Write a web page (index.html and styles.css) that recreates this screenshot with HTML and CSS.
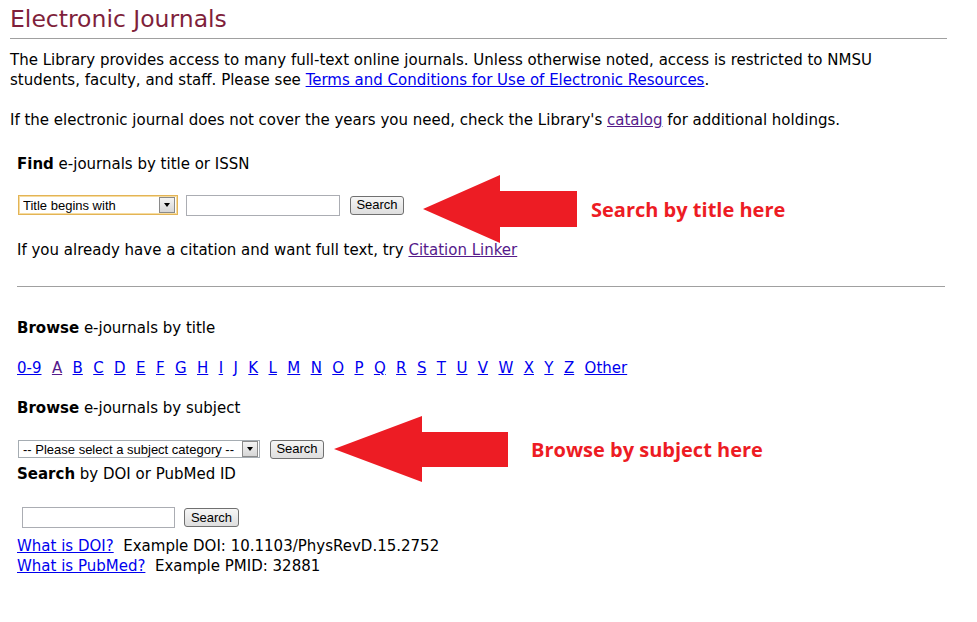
FILE: index.html
```html
<!DOCTYPE html>
<html lang="en">
<head>
    <meta charset="UTF-8">
    <title>Electronic Journals</title>
    <link rel="stylesheet" href="styles.css">
</head>
<body>
<div class="page">
    <h1 class="title">Electronic Journals</h1>

    <p class="intro">The Library provides access to many full-text online journals. Unless otherwise noted, access is restricted to NMSU students, faculty, and staff. Please see <a href="#">Terms and Conditions for Use of Electronic Resources</a>.</p>
    <p class="para">If the electronic journal does not cover the years you need, check the Library's <a href="#" class="visited">catalog</a> for additional holdings.</p>

    <div class="box">
        <div class="label find"><b>Find</b> e-journals by title or ISSN</div>
        <form class="row row-title">
            <span class="combo combo-focus">
                <select class="title-select"><option>Title begins with</option></select>
                <span class="combo-btn"><span class="tri"></span></span>
            </span>
            <input type="text" class="field field-title">
            <button type="button" class="btn">Search</button>
        </form>
        <p class="citation">If you already have a citation and want full text, try <a href="#" class="visited">Citation Linker</a></p>
    </div>

    <hr class="rule">

    <div class="box">
        <div class="label browse-title"><b>Browse</b> e-journals by title</div>
        <div class="letters">
            <a href="#">0-9</a><a href="#" class="visited">A</a><a href="#">B</a><a href="#">C</a><a href="#">D</a><a href="#">E</a><a href="#">F</a><a href="#">G</a><a href="#">H</a><a href="#">I</a><a href="#">J</a><a href="#">K</a><a href="#">L</a><a href="#">M</a><a href="#">N</a><a href="#">O</a><a href="#">P</a><a href="#">Q</a><a href="#">R</a><a href="#">S</a><a href="#">T</a><a href="#">U</a><a href="#">V</a><a href="#">W</a><a href="#">X</a><a href="#">Y</a><a href="#">Z</a><a href="#">Other</a>
        </div>
        <div class="label browse-subject"><b>Browse</b> e-journals by subject</div>
        <form class="row row-subject">
            <span class="combo combo-subject">
                <select class="subject-select"><option>-- Please select a subject category --</option></select>
                <span class="combo-btn"><span class="tri"></span></span>
            </span>
            <button type="button" class="btn">Search</button>
        </form>
        <div class="label doi-label"><b>Search</b> by DOI or PubMed ID</div>
        <form class="row row-doi">
            <input type="text" class="field field-doi">
            <button type="button" class="btn">Search</button>
        </form>
        <div class="examples">
            <div><a href="#">What is DOI?</a>&nbsp; Example DOI: 10.1103/PhysRevD.15.2752</div>
            <div><a href="#">What is PubMed?</a>&nbsp; Example PMID: 32881</div>
        </div>
    </div>

    <div class="note note-title">
        <svg class="arrow" width="156" height="70" viewBox="0 0 156 70">
            <polygon points="0,34 77,0 77,16 154,16 154,52 77,52 77,68" fill="#ed1c24"/>
        </svg>
        <span class="note-text">Search by title here</span>
    </div>
    <div class="note note-subject">
        <svg class="arrow" width="176" height="68" viewBox="0 0 176 68">
            <polygon points="0,33 88,0 88,16 174,16 174,51 88,51 88,66" fill="#ed1c24"/>
        </svg>
        <span class="note-text">Browse by subject here</span>
    </div>
</div>
</body>
</html>
```

FILE: styles.css
```css
body {
    margin: 0;
    background-color: #fff;
    color: #000;
    font-family: "DejaVu Sans", Verdana, sans-serif;
    font-size: 15px;
    line-height: 20px;
}
a { color: #0000ee; }
a.visited { color: #551a8b; }
.page {
    position: relative;
    padding: 0 30px 0 10px;
    width: 937px;
}
.title {
    margin: 0;
    padding: 6px 0 6px 0;
    font-size: 23.5px;
    line-height: 26px;
    font-weight: normal;
    color: #7f1f3b;
    border-bottom: 1px solid #a0a0a0;
}
.intro { margin: 11px 0 0 0; max-width: 900px; }
.para { margin: 20px 0 0 0; }
.box { padding-left: 7px; }
.label { line-height: 20px; }
.label b { font-weight: bold; }
.find { margin-top: 24px; }
.row {
    display: flex;
    align-items: center;
    margin: 0;
}
.row-title { margin-top: 21px; height: 20px; }
.citation { margin: 25px 0 0 0; }
.rule {
    margin: 26px 2px 0 7px;
    border: none;
    border-top: 1px solid #a0a0a0;
    height: 0;
}
.browse-title { margin-top: 31px; }
.letters {
    display: flex;
    gap: 10.4px;
    margin-top: 20px;
}
.browse-subject { margin-top: 20px; }
.row-subject { margin-top: 22px; height: 18px; padding-left: 1px; }
.doi-label { margin-top: 6px; }
.row-doi { margin-top: 23px; height: 21px; padding-left: 5px; }
.examples { margin-top: 8px; }

/* form controls, old windows look */
.combo {
    position: relative;
    display: inline-flex;
    align-items: center;
    box-sizing: border-box;
    height: 20px;
    border: 1px solid #a5acb2;
    background: #fff;
}
.combo select {
    appearance: none;
    -webkit-appearance: none;
    border: none;
    outline: none;
    background: transparent;
    font-family: "Liberation Sans", Arial, sans-serif;
    font-size: 13px;
    color: #000;
    padding: 0 0 0 4px;
    margin: 0;
    height: 100%;
    width: 100%;
}
.combo-focus {
    width: 160px;
    margin-left: 1px;
    border: 1px solid #e3b456;
    box-shadow: inset 0 0 0 1px #f6dca0;
}
.combo-subject {
    width: 242px;
    height: 18px;
}
.combo-btn {
    position: absolute;
    right: 2px;
    top: 1px;
    bottom: 1px;
    width: 16px;
    box-sizing: border-box;
    border: 1px solid #8a8a8a;
    background: linear-gradient(#f4f4f4, #d6d6d6);
    display: flex;
    align-items: center;
    justify-content: center;
}
.combo-subject .combo-btn { top: 0; bottom: 0; right: 1px; }
.tri {
    width: 0;
    height: 0;
    border-left: 3.5px solid transparent;
    border-right: 3.5px solid transparent;
    border-top: 4px solid #000;
}
.field {
    box-sizing: border-box;
    border: 1px solid #abadb3;
    background: #fff;
    padding: 0;
    margin: 0;
}
.field-title {
    width: 154px;
    height: 21px;
    margin-left: 8px;
}
.field-doi {
    width: 153px;
    height: 21px;
}
.btn {
    box-sizing: border-box;
    height: 19px;
    padding: 0 4px;
    border: 1px solid #707070;
    border-radius: 3px;
    background: linear-gradient(#f6f6f6, #dedede);
    font-family: "Liberation Sans", Arial, sans-serif;
    font-size: 13px;
    color: #000;
    line-height: 16px;
}
.row-title .btn { margin-left: 10px; width: 54px; }
.row-subject .btn { margin-left: 10px; width: 54px; }
.row-doi .btn { margin-left: 9px; width: 55px; }

/* red annotation arrows */
.note {
    position: absolute;
    display: flex;
    align-items: center;
}
.note-title { left: 423px; top: 175px; }
.note-subject { left: 334px; top: 416px; }
.note-text {
    font-family: "Open Sans", "Liberation Sans", sans-serif;
    font-weight: bold;
    font-size: 20px;
    color: #ed1c24;
    white-space: nowrap;
}
.note-title .note-text { margin-left: 12px; }
.note-subject .note-text { margin-left: 21px; }
```
